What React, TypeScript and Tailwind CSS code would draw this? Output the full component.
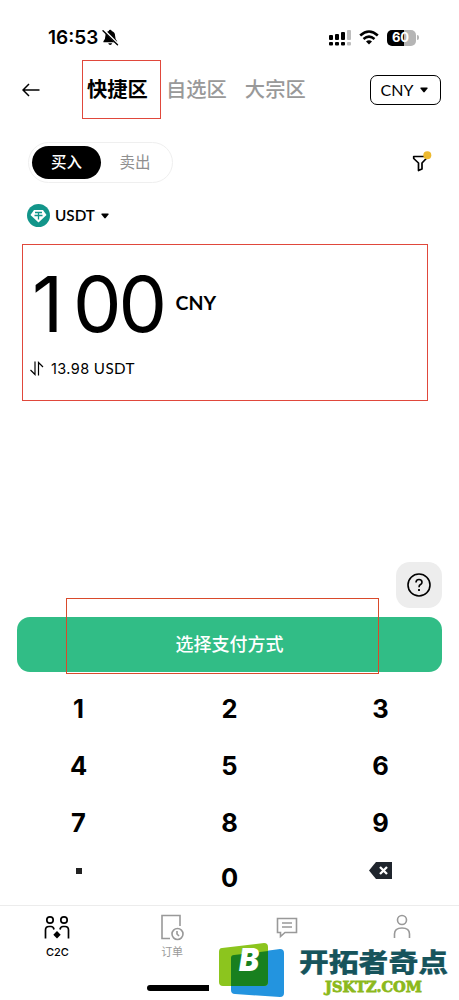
import { useState } from 'react';
import type { ReactNode } from 'react';

const KEYS = ['1', '2', '3', '4', '5', '6', '7', '8', '9', '.', '0', 'del'];

function Caret() {
  return (
    <svg width="8" height="6" viewBox="0 0 8 6" className="shrink-0">
      <path d="M1 .5h6q1 .2.5 1L4.7 5q-.7.8-1.4 0L.5 1.500Q0 .7 1 .5z" fill="currentColor" />
    </svg>
  );
}

function StatusBar() {
  return (
    <div className="flex h-[60px] items-center justify-between pt-[15px] pr-[40px] pl-[48px]">
      <div className="flex items-center gap-[4px]">
        <span className="text-[19px] font-semibold leading-none font-['Inter',sans-serif]">16:53</span>
        <svg width="17" height="17" viewBox="0 0 17 17">
          <path d="M8.200.8q1.300 0 1.500 1.200 3.400 1 3.400 4.800 0 3.600 2 5.400v1H1.400v-1q2-1.800 2-5.400 0-3.800 3.300-4.800Q7 .8 8.200.8zM6.200 14.200h4q-.5 1.800-2 1.800t-2-1.800z" fill="black" />
          <path d="M2 1.300l14 14" stroke="white" strokeWidth="2.400" />
          <path d="M1 1.800l14.500 14" stroke="black" strokeWidth="1.400" strokeLinecap="round" />
        </svg>
      </div>
      <div className="flex items-center">
        <svg width="22" height="16" viewBox="0 0 22 16">
          <rect x="0" y="5" width="4" height="5" rx="1" />
          <rect x="6" y="4" width="4" height="6" rx="1" />
          <rect x="12" y="2" width="4" height="8" rx="1" />
          <rect x="18" y="0" width="4" height="10" rx="1" fill="#bdbdbd" />
          <rect x="0" y="12" width="4" height="3.500" rx="1" />
          <rect x="6" y="12" width="4" height="3.500" rx="1" />
          <rect x="12" y="12" width="4" height="3.500" rx="1" />
          <rect x="18" y="12" width="4" height="3.500" rx="1" fill="#bdbdbd" />
        </svg>
        <svg width="20" height="15" viewBox="0 0 20 15" className="ml-[8px]">
          <path d="M1.200 5.500Q10-2.500 18.800 5.500" fill="none" stroke="black" strokeWidth="2.600" />
          <path d="M4.500 9Q10 4.300 15.500 9" fill="none" stroke="black" strokeWidth="2.500" />
          <path d="M10 14.500l-3-3Q10 8.900 13 11.500z" />
        </svg>
        <div className="ml-[8px] flex h-[16px] w-[29px] items-center justify-center rounded-[5px] bg-[linear-gradient(90deg,#000_60%,#b5b5b5_60%)] pr-[2px] text-[13px] font-bold leading-none text-white font-['Inter',sans-serif]">
          60
        </div>
        <div className="ml-px h-[5px] w-[2px] rounded-r-full bg-[#b5b5b5]" />
      </div>
    </div>
  );
}

function Header() {
  return (
    <div className="flex h-[59px] items-center pr-[18px] pl-[22px]">
      <svg width="18" height="14" viewBox="0 0 18 14" fill="none" stroke="black" strokeWidth="1.500">
        <path d="M17.500 7H1.200M7 1L1 7l6 6" />
      </svg>
      <div className="relative ml-[42px] flex h-[59px] w-[79px] items-center border border-[#e0483b] pl-[4px] text-[20.3px] font-bold whitespace-nowrap">
        快捷区
      </div>
      <span className="ml-[5px] text-[20.3px] font-medium whitespace-nowrap text-[#999]">自选区</span>
      <span className="ml-[18px] text-[20.3px] font-medium whitespace-nowrap text-[#999]">大宗区</span>
      <button className="ml-auto flex h-[30px] w-[71px] items-center justify-center gap-[7px] rounded-[7px] border border-black pr-[2px] text-[16px]">
        CNY
        <Caret />
      </button>
    </div>
  );
}

function TradeToggle() {
  return (
    <div className="mt-[23px] flex h-[41px] items-center justify-between pr-[27px] pl-[28px]">
      <div className="flex h-[41px] w-[145px] items-center rounded-full border border-[#efefef] p-[3px]">
        <button className="h-[33px] w-[69px] rounded-full bg-black text-[15.5px] font-medium text-white">买入</button>
        <button className="h-[33px] flex-1 text-[15.5px] text-[#8f8f8f]">卖出</button>
      </div>
      <svg width="20" height="22" viewBox="0 0 20 22" className="mb-[2px]">
        <path d="M1.700 5.500h12.600v2L10 12v6l-3.500 1.500V12L1.700 7.500z" fill="none" stroke="black" strokeWidth="1.700" strokeLinejoin="round" />
        <circle cx="15.300" cy="4.200" r="4" fill="#edb92e" />
      </svg>
    </div>
  );
}

function AmountPanel({ amount }: { amount: string }) {
  return (
    <div className="mt-[16px] ml-[22px] h-[157px] w-[406px] border border-[#e0483b]">
      <div className="flex h-[116px] items-center pl-[6px]">
        <div className="flex pt-[2px] text-[77px] leading-none font-['Inter',sans-serif]">
          {amount.split('').map((char, i) => (
            <span key={i} className={`flex w-[45.5px] justify-center ${char === '1' ? 'pr-[8px]' : ''}`}>
              {char}
            </span>
          ))}
        </div>
        <span className="ml-[10px] text-[19.5px] font-bold">CNY</span>
      </div>
      <div className="flex h-[14px] items-center pl-[7px]">
        <svg width="14" height="15" viewBox="0 0 14 15" fill="none" stroke="black" strokeWidth="1.200">
          <path d="M5 .5v13L.5 9M8.500 14.500V1.500L13 6" />
        </svg>
        <span className="ml-[7px] text-[15.200px] tracking-[0.4px]">
          <span className="text-[14.500px] font-['Inter',sans-serif]">13.98</span> USDT
        </span>
      </div>
    </div>
  );
}

function Keypad({ onPress }: { onPress: (key: string) => void }) {
  return (
    <div className="mt-[8px] grid h-[225px] grid-cols-3 grid-rows-[57px_57px_57px_54px] px-[3px]">
      {KEYS.map((key) => (
        <button
          key={key}
          onClick={() => onPress(key)}
          className="flex items-center justify-center text-[25.5px] font-bold leading-none font-['Inter',sans-serif]"
        >
          {key === '.' && <span className="mb-[15px] h-[6px] w-[6px] bg-[#222]" />}
          {key === 'del' && (
            <svg width="23" height="17" viewBox="0 0 23 17" className="mb-[15px]">
              <path d="M7 0h16v17H7L0 8.500z" fill="#1f252d" />
              <path d="M11 5l7 7M18 5l-7 7" stroke="white" strokeWidth="2.300" />
            </svg>
          )}
          {key !== '.' && key !== 'del' && key}
        </button>
      ))}
    </div>
  );
}

function NavItem({ label, active, children }: { label?: string; active?: boolean; children: ReactNode }) {
  return (
    <div className={`flex flex-1 flex-col items-center pt-[8px] text-[11px] ${active ? 'text-black' : 'text-[#999]'}`}>
      <svg width="28" height="28" viewBox="0 0 28 28" fill="none" stroke="currentColor" strokeWidth="1.600">
        {children}
      </svg>
      {label && (
        <span className={`mt-[2px] leading-[16px] font-['Inter','Noto_Sans_CJK_SC',sans-serif] ${active ? 'font-medium' : ''}`}>
          {label}
        </span>
      )}
    </div>
  );
}

function BottomNav() {
  return (
    <div className="flex h-[80px] border-t border-[#ececec]">
      <NavItem label="C2C" active>
        <circle cx="7" cy="6" r="3.200" strokeWidth="1.700" />
        <circle cx="21" cy="6" r="3.200" strokeWidth="1.700" />
        <path d="M2.500 24.500V16q0-3.500 3.500-3.500h2q2.500 0 3 3M25.500 24.500V16q0-3.500-3.500-3.500h-2q-2.500 0-3 3" strokeWidth="1.700" />
        <path d="M14 17l3.700 3.700-3.700 3.700-3.700-3.700z" fill="currentColor" stroke="none" />
      </NavItem>
      <NavItem label="订单">
        <path d="M22 12V1.500H4v23h8" />
        <circle cx="19.500" cy="20" r="5.500" />
        <path d="M19 17v3l2 2" />
      </NavItem>
      <NavItem>
        <path d="M4.500 4.500h19v14H12L7.500 22.500V18.500h-3zM9 9h10M9 13h10" />
      </NavItem>
      <NavItem>
        <circle cx="14" cy="6" r="4.500" />
        <path d="M6.500 24V20q0-6 7.500-6t7.500 6v4" />
      </NavItem>
    </div>
  );
}

function SiteLogo() {
  return (
    <svg width="250" height="70" viewBox="0 -10 250 70" className="absolute top-[930px] left-[209px]">
      <rect width="250" height="60" fill="white" />
      <path d="M25 15q-3 0-3 3v32q0 4 4 4l45 3q4 0 4-4V13q0-4-4-4z" fill="#2394df" />
      <path d="M13 8l42-5q4 0 4 4v35q0 4-4 4H14q-4 0-4-4V12q0-4 3-4z" fill="#8cc51e" />
      <path d="M25 15l34-4v31q0 4-4 4H22V18q0-3 3-3z" fill="#18801f" />
      <text x="30" y="30.500" fontSize="32" fontWeight="900" fontStyle="italic" fill="white" textLength="20" lengthAdjust="spacingAndGlyphs" fontFamily="Inter, sans-serif">B</text>
      <text x="90" y="31.500" fontSize="26.500" fontWeight="900" fill="#17545c" stroke="#17545c" strokeWidth=".2" textLength="149" lengthAdjust="spacingAndGlyphs" fontFamily="Noto Sans CJK SC, sans-serif">开拓者奇点</text>
      <text x="116" y="52" fontSize="14.500" fontWeight="700" fill="#8cb91c" stroke="#8cb91c" strokeWidth=".8" textLength="97" lengthAdjust="spacingAndGlyphs" fontFamily="DejaVu Serif, serif">JSKTZ.COM</text>
    </svg>
  );
}

export default function App() {
  const [amount, setAmount] = useState('100');

  const handlePress = (key: string) => {
    if (key === 'del') {
      setAmount((prev) => prev.slice(0, -1) || '0');
      return;
    }
    if (key === '.' && amount.includes('.')) return;
    setAmount((prev) => (prev === '0' && key !== '.' ? key : prev + key));
  };

  return (
    <div className="relative flex h-[1000px] w-[459px] flex-col overflow-hidden bg-white text-black font-['Lato','Noto_Sans_CJK_SC',sans-serif]">
      <StatusBar />
      <Header />
      <TradeToggle />

      <div className="mt-[20px] flex h-[25px] items-center pl-[27px]">
        <svg width="23" height="23" viewBox="0 0 23 23">
          <circle cx="11.500" cy="11.500" r="11.500" fill="#12958a" />
          <path d="M7 6h9l3.500 5-8 7.500-8-7.500z" fill="white" />
          <path d="M8 8.500h7M11.500 8.500v7M7.500 11.500h8" stroke="#12958a" strokeWidth="1.300" />
        </svg>
        <span className="ml-[5px] mr-[6px] text-[15.3px] font-semibold">USDT</span>
        <Caret />
      </div>

      <AmountPanel amount={amount} />

      <div className="mt-[161px] flex justify-end pr-[17px]">
        <button className="flex h-[46px] w-[46px] items-center justify-center rounded-[14px] bg-[#ededed]">
          <svg width="24" height="24" viewBox="0 0 24 24" fill="none" stroke="black" strokeWidth="1.600">
            <circle cx="12" cy="12" r="11" />
            <path d="M9 9.500q0-3 3-3t3 2.700q0 1.500-1.500 2.300T12 14.200" />
            <path d="M12 16v2" strokeWidth="1.800" />
          </svg>
        </button>
      </div>

      <div className="relative mx-[17px] mt-[9px]">
        <button className="h-[55px] w-full rounded-[13px] bg-[#31bd86] text-[18px] font-medium text-white">
          选择支付方式
        </button>
        <div className="pointer-events-none absolute top-[-19px] left-[49px] h-[76px] w-[313px] border border-[#d94a2b]" />
      </div>

      <Keypad onPress={handlePress} />
      <BottomNav />

      <div className="ml-[147px] h-[6px] w-[90px] rounded-full bg-black" />
      <SiteLogo />
    </div>
  );
}
